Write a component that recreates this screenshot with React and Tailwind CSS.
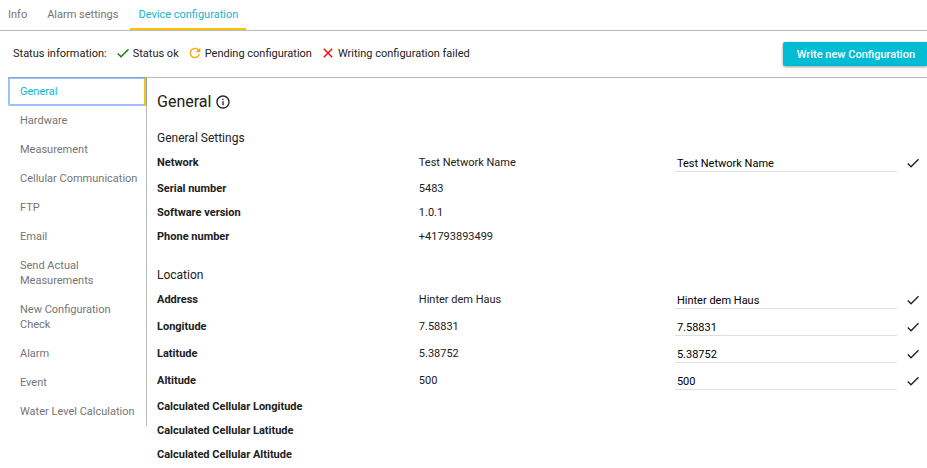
import { useState } from 'react';
import { MdClear, MdDone, MdInfoOutline, MdRefresh } from 'react-icons/md';

const tabs = ['Info', 'Alarm settings', 'Device configuration'];

const sections = [
  'General',
  'Hardware',
  'Measurement',
  'Cellular Communication',
  'FTP',
  'Email',
  'Send Actual Measurements',
  'New Configuration Check',
  'Alarm',
  'Event',
  'Water Level Calculation',
];

const generalRows = [
  { id: 'network', label: 'Network', value: 'Test Network Name', editable: true },
  { id: 'serial', label: 'Serial number', value: '5483' },
  { id: 'software', label: 'Software version', value: '1.0.1' },
  { id: 'phone', label: 'Phone number', value: '+41793893499' },
];

const locationRows = [
  { id: 'address', label: 'Address', value: 'Hinter dem Haus', editable: true },
  { id: 'longitude', label: 'Longitude', value: '7.58831', editable: true },
  { id: 'latitude', label: 'Latitude', value: '5.38752', editable: true },
  { id: 'altitude', label: 'Altitude', value: '500', editable: true },
  { id: 'cell-longitude', label: 'Calculated Cellular Longitude', value: '' },
  { id: 'cell-latitude', label: 'Calculated Cellular Latitude', value: '' },
  { id: 'cell-altitude', label: 'Calculated Cellular Altitude', value: '' },
];

function SettingsTable({ title, rows }) {
  return (
    <section>
      <h3 className="pt-0.5 text-xs leading-[22px]">{title}</h3>
      <table className="w-full table-fixed border-collapse">
        <colgroup>
          <col className="w-[34%]" />
          <col className="w-[33%]" />
          <col className="w-[33%]" />
        </colgroup>
        <tbody>
          {rows.map((row) => (
            <tr key={row.id} className={row.editable ? 'h-[27px]' : 'h-6'}>
              <th scope="row" className="p-0 text-left align-middle font-bold">
                {row.editable ? <label htmlFor={row.id}>{row.label}</label> : row.label}
              </th>
              <td className="p-0 align-middle">{row.value}</td>
              <td className="p-0 align-middle">
                {row.editable && (
                  <div className="flex items-center pr-1.5 pl-0.5">
                    <input
                      id={row.id}
                      type="text"
                      defaultValue={row.value}
                      className="h-[18px] min-w-0 flex-1 border-b border-[#e0e0e0] bg-transparent px-0.5 pt-0.5 text-black outline-none"
                    />
                    <MdDone className="ml-2 size-4 shrink-0" aria-hidden="true" />
                  </div>
                )}
              </td>
            </tr>
          ))}
        </tbody>
      </table>
    </section>
  );
}

export default function App() {
  const [tab, setTab] = useState('Device configuration');
  const [section, setSection] = useState('General');

  return (
    <div className="bg-white font-[Roboto,'Liberation_Sans',sans-serif] text-[11px] leading-[15px] text-[#212121]">
      <nav className="flex gap-1 border-b border-[#b9b9b9]">
        {tabs.map((name) => (
          <button
            key={name}
            type="button"
            onClick={() => setTab(name)}
            className={`h-[30px] border-b-2 px-2 ${
              tab === name ? 'border-[#ffc107] text-[#12b5d0]' : 'border-transparent text-[#757575]'
            }`}
          >
            {name}
          </button>
        ))}
      </nav>

      <div className="flex h-[46px] items-center pl-[13px]">
        <div className="flex items-center gap-2 pb-0.5">
          <span>Status information:</span>
          <span className="flex items-center gap-0.5">
            <MdDone className="size-4 text-[#008000]" aria-hidden="true" />
            Status ok
          </span>
          <span className="flex items-center gap-0.5">
            <MdRefresh className="size-4 text-[#ffa500]" aria-hidden="true" />
            Pending configuration
          </span>
          <span className="flex items-center gap-0.5">
            <MdClear className="size-4 text-[#ff0000]" aria-hidden="true" />
            Writing configuration failed
          </span>
        </div>
        <button
          type="button"
          className="ml-auto h-6 rounded-l-xs bg-[#00bcd4] pr-3 pl-3.5 font-medium text-white shadow-[0_1px_3px_rgba(0,0,0,0.4)]"
        >
          Write new Configuration
        </button>
      </div>

      <div className="ml-2 flex items-start border-t border-[#b9b9b9]">
        <nav className="-mt-px flex w-[139px] shrink-0 flex-col border-r border-[#b9b9b9]">
          {sections.map((name) => (
            <button
              key={name}
              type="button"
              onClick={() => setSection(name)}
              className={`py-[7px] pr-2 pl-3 text-left ${
                section === name
                  ? '-mr-px rounded-xs text-[#12b5d0] shadow-[inset_-1px_0_0_0_#86a5d8,inset_0_1px_0_0_#86a5d8,inset_-3px_0_0_0_#ffc107,inset_0_0_0_2px_#a1c0fb]'
                  : 'text-[#757575]'
              }`}
            >
              {name}
            </button>
          ))}
        </nav>

        <main className="min-w-0 flex-1 pt-3 pl-2.5">
          <h2 className="mb-[11px] flex h-6 items-center gap-1 text-base">
            General
            <MdInfoOutline className="size-4" aria-label="Information" />
          </h2>
          <div className="flex flex-col gap-3.5">
            <SettingsTable title="General Settings" rows={generalRows} />
            <SettingsTable title="Location" rows={locationRows} />
          </div>
        </main>
      </div>
    </div>
  );
}
